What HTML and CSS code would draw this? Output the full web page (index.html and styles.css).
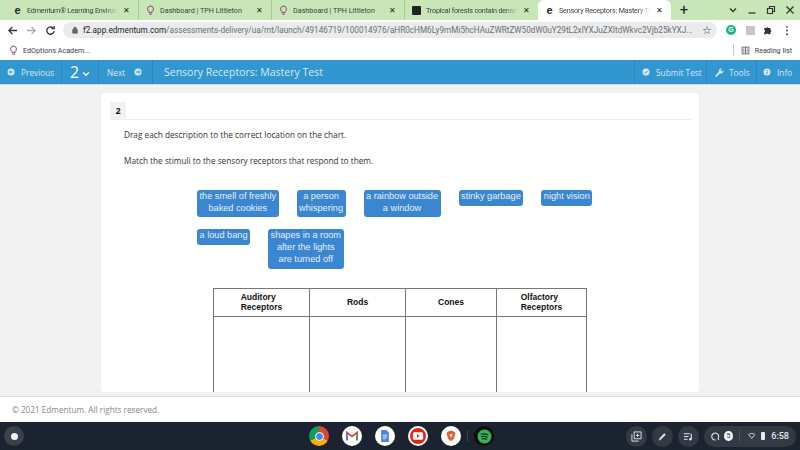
FILE: index.html
```html
<!DOCTYPE html>
<html lang="en">
<head>
  <meta charset="UTF-8">
  <title>Sensory Receptors: Mastery Test</title>
  <link rel="stylesheet" href="styles.css">
</head>
<body>
  <div class="tabstrip">
    <div class="tab">
      <span class="fav-e">e</span><span class="tab-title tab-fade">Edmentum® Learning Environ</span><span class="tab-x">✕</span>
    </div>
    <div class="tab">
      <svg class="fav-bulb" viewBox="0 0 12 14"><path d="M6 1a4 4 0 0 0-2 7.4V10h4V8.4A4 4 0 0 0 6 1zM4.500 12h3" fill="none" stroke="#8a3a7a" stroke-width="1.3"/></svg>
      <span class="tab-title">Dashboard | TPH Littleton</span><span class="tab-x">✕</span>
    </div>
    <div class="tab">
      <svg class="fav-bulb" viewBox="0 0 12 14"><path d="M6 1a4 4 0 0 0-2 7.4V10h4V8.4A4 4 0 0 0 6 1zM4.500 12h3" fill="none" stroke="#8a3a7a" stroke-width="1.3"/></svg>
      <span class="tab-title">Dashboard | TPH Littleton</span><span class="tab-x">✕</span>
    </div>
    <div class="tab">
      <span class="fav-book"></span><span class="tab-title tab-fade">Tropical forests contain dense</span><span class="tab-x">✕</span>
    </div>
    <div class="tab tab-active">
      <span class="fav-e">e</span><span class="tab-title tab-fade">Sensory Receptors: Mastery Te</span><span class="tab-x">✕</span>
    </div>
    <span class="tab-new">+</span>
    <div class="win-controls">
      <svg viewBox="0 0 10 10"><path d="M2 3.500l3 3 3-3" fill="none" stroke="#333" stroke-width="1.3"/></svg>
      <svg viewBox="0 0 10 10"><path d="M1.500 8h7" stroke="#333" stroke-width="1.3"/></svg>
      <svg viewBox="0 0 10 10"><path d="M1.500 3.500h5v5h-5zM3.500 3.500v-2h5v5h-2" fill="none" stroke="#333" stroke-width="1.2"/></svg>
      <svg viewBox="0 0 10 10"><path d="M1.500 1.500l7 7M8.500 1.500l-7 7" stroke="#333" stroke-width="1.3"/></svg>
    </div>
  </div>

  <div class="addressbar">
    <svg class="nav-icon" viewBox="0 0 12 12"><path d="M11 6H2M6 2L2 6l4 4" fill="none" stroke="#333" stroke-width="1.4"/></svg>
    <svg class="nav-icon" viewBox="0 0 12 12"><path d="M1 6h9M6 2l4 4-4 4" fill="none" stroke="#aaa" stroke-width="1.4"/></svg>
    <svg class="nav-icon" viewBox="0 0 12 12"><path d="M10 6.500A4 4 0 1 1 8.800 3.200M10 1v3H7" fill="none" stroke="#333" stroke-width="1.4"/></svg>
    <div class="omnibox">
      <svg class="lock" viewBox="0 0 10 10"><path d="M2 4.500h6V9H2zM3.300 4.500V3a1.700 1.700 0 0 1 3.400 0v1.500" fill="#666" stroke="#666" stroke-width=".8"/></svg>
      <span class="url"><span class="url-host">f2.app.edmentum.com</span>/assessments-delivery/ua/mt/launch/49146719/100014976/aHR0cHM6Ly9mMi5hcHAuZWRtZW50dW0uY29tL2xlYXJuZXItdWkvc2Vjb25kYXJ...</span>
      <span class="star">☆</span>
    </div>
    <span class="ext-g">G</span>
    <span class="ext-gray"></span>
    <svg class="ext-puzzle" viewBox="0 0 12 12"><path d="M1.500 3.500h2.500a1.300 1.300 0 0 1 2.500 0H9V6a1.300 1.300 0 0 1 0 2.500V11H6.500a1.300 1.300 0 0 0-2.500 0H1.500V8.500a1.300 1.300 0 0 0 0-2.500z" fill="#333"/></svg>
    <svg class="ext-menu" viewBox="0 0 4 12"><circle cx="2" cy="2" r="1" fill="#333"/><circle cx="2" cy="6" r="1" fill="#333"/><circle cx="2" cy="10" r="1" fill="#333"/></svg>
  </div>

  <div class="bookmarks">
    <svg class="fav-bulb" viewBox="0 0 12 14"><path d="M6 1a4 4 0 0 0-2 7.4V10h4V8.4A4 4 0 0 0 6 1zM4.500 12h3" fill="none" stroke="#8a3a7a" stroke-width="1.3"/></svg>
    <span class="bookmark-name">EdOptions Academ...</span>
    <span class="reading">
      <svg class="reading-icon" viewBox="0 0 12 12"><path d="M1.500 1.500h9v9h-9zM6 1.500v9M3 4h1.500M3 6h1.500M3 8h1.500M7.500 4H9M7.500 6H9M7.500 8H9" fill="none" stroke="#444" stroke-width="1"/></svg>
      Reading list
    </span>
  </div>

  <header class="appbar">
    <div class="appbar-item item-prev">
      <svg class="circle-icon" viewBox="0 0 10 10"><circle cx="5" cy="5" r="3.500" fill="#d5e8f4"/><path d="M7 5H3.200M4.800 3.400L3.200 5l1.600 1.600" fill="none" stroke="#3397cf" stroke-width="1"/></svg>
      Previous
    </div>
    <div class="appbar-item item-num">2<svg class="chev" viewBox="0 0 10 6"><path d="M1.500 1l3.500 3.500L8.500 1" fill="none" stroke="#fff" stroke-width="1.7"/></svg></div>
    <div class="appbar-item item-next">
      Next
      <svg class="circle-icon" viewBox="0 0 10 10"><circle cx="5" cy="5" r="3.500" fill="#d5e8f4"/><path d="M3 5h3.800M5.200 3.400L6.800 5 5.200 6.600" fill="none" stroke="#3397cf" stroke-width="1"/></svg>
    </div>
    <div class="test-title">Sensory Receptors: Mastery Test</div>
    <div class="appbar-item item-submit">
      <svg class="circle-icon" viewBox="0 0 10 10"><circle cx="5" cy="5" r="3.500" fill="#d5e8f4"/><path d="M3.300 5l1.200 1.200 2.200-2.400" fill="none" stroke="#3397cf" stroke-width="1"/></svg>
      Submit Test
    </div>
    <div class="appbar-item item-tools">
      <svg class="circle-icon" viewBox="0 0 10 10"><path d="M1 9l4-4.200a2.300 2.300 0 0 1 3-3L6.600 3.200l.5 1 1 .3L9.300 3.300a2.300 2.300 0 0 1-3.100 2.900L2.300 10z" fill="#d5e8f4"/></svg>
      Tools
    </div>
    <div class="appbar-item item-info">
      <svg class="circle-icon" viewBox="0 0 10 10"><circle cx="5" cy="5" r="3.500" fill="#d5e8f4"/><path d="M5 4.500v2.500M5 3v1" stroke="#3397cf" stroke-width="1"/></svg>
      Info
    </div>
  </header>

  <main class="stage">
    <section class="card">
      <div class="question-head"><span class="question-num">2</span></div>
      <p class="prompt prompt-first">Drag each description to the correct location on the chart.</p>
      <p class="prompt">Match the stimuli to the sensory receptors that respond to them.</p>

      <div class="chips">
        <div class="chip">the smell of freshly<br>baked cookies</div>
        <div class="chip">a person<br>whispering</div>
        <div class="chip">a rainbow outside<br>a window</div>
        <div class="chip">stinky garbage</div>
        <div class="chip">night vision</div>
        <div class="chip">a loud bang</div>
        <div class="chip">shapes in a room<br>after the lights<br>are turned off</div>
      </div>

      <table class="chart">
        <colgroup>
          <col class="col-a"><col class="col-b"><col class="col-c"><col class="col-d">
        </colgroup>
        <tr class="chart-head">
          <th><span class="th-left">Auditory<br>Receptors</span></th>
          <th>Rods</th>
          <th>Cones</th>
          <th><span class="th-left">Olfactory<br>Receptors</span></th>
        </tr>
        <tr class="chart-body">
          <td></td><td></td><td></td><td></td>
        </tr>
      </table>
    </section>
  </main>

  <footer class="page-footer">© 2021 Edmentum. All rights reserved.</footer>

  <div class="shelf">
    <span class="launcher"><span class="launcher-dot"></span></span>
    <div class="shelf-apps">
      <span class="app app-chrome"><span class="chrome-core"></span></span>
      <span class="app app-white">
        <svg viewBox="0 0 14 12"><path d="M1 11V2l6 4.500L13 2v9" fill="none" stroke="#d9453a" stroke-width="2"/><path d="M1 11V3" stroke="#3f7fe0" stroke-width="2"/><path d="M13 11V3" stroke="#35a853" stroke-width="2"/></svg>
      </span>
      <span class="app app-white">
        <svg viewBox="0 0 12 14"><path d="M1.500 0h6l3 3v11h-9z" fill="#4a86e8"/><path d="M3.500 6h5M3.500 8h5M3.500 10h3.500" stroke="#fff" stroke-width=".9"/></svg>
      </span>
      <span class="app app-yt">
        <svg viewBox="0 0 14 12"><rect x="1" y="1.500" width="12" height="9" rx="2" fill="#fff"/><path d="M5.800 4l3.400 2-3.400 2z" fill="#e62117"/></svg>
      </span>
      <span class="app app-white">
        <svg viewBox="0 0 12 14"><path d="M2 2l4-1.500L10 2l1 2-1.500 6L6 13 2.500 10 1 4z" fill="#e0602c"/><path d="M4 5h4L6 9z" fill="#fff"/></svg>
      </span>
      <span class="shelf-sep"></span>
      <span class="app app-spotify">
        <svg viewBox="0 0 14 14"><circle cx="7" cy="7" r="6.500" fill="#2fb457"/><path d="M3.500 5c2.500-.7 5-.5 7 .6M4 7.200c2-.5 4.200-.3 5.900.7M4.500 9.200c1.700-.4 3.300-.2 4.700.6" fill="none" stroke="#123" stroke-width="1"/></svg>
      </span>
    </div>
    <div class="shelf-tray">
      <span class="tray-btn">
        <svg viewBox="0 0 12 12"><path d="M3.500 1h7.500v7.500H3.500zM1 3.500V11h7.500M7.200 3v3.500M5.500 4.800H9" fill="none" stroke="#e8eaed" stroke-width="1"/></svg>
      </span>
      <span class="tray-btn">
        <svg viewBox="0 0 12 12"><path d="M2 10.500l1-3L8 2.500l1.500 1.500-5 5z" fill="#e8eaed"/></svg>
      </span>
      <span class="tray-btn">
        <svg viewBox="0 0 12 12"><path d="M1 3h6.500M1 6h5M1 9h4M9 3v6" fill="none" stroke="#e8eaed" stroke-width="1.2"/><circle cx="8" cy="9" r="1.300" fill="#e8eaed"/></svg>
      </span>
      <span class="tray-status">
        <svg class="tray-q" viewBox="0 0 12 12"><path d="M10.500 10.500L8.500 8.500M9.500 8A4.500 4.500 0 1 0 6 10.500" fill="none" stroke="#e8eaed" stroke-width="1.4"/></svg>
        <span class="tray-count">5</span>
        <span class="tray-sep"></span>
        <svg class="tray-wifi" viewBox="0 0 12 10"><path d="M1 2.500c3-2 7-2 10 0L6 9z" fill="none" stroke="#e8eaed" stroke-width="1.3"/></svg>
        <span class="tray-batt"></span>
        <span class="tray-time">6:58</span>
      </span>
    </div>
  </div>
</body>
</html>
```
FILE: styles.css
```css
html, body {
  margin: 0;
  height: 100%;
}

body {
  width: 800px;
  height: 450px;
  overflow: hidden;
  display: flex;
  flex-direction: column;
  font-family: "Open Sans", "Liberation Sans", sans-serif;
  background: #fff;
}

/* browser chrome */
.tabstrip {
  height: 20px;
  flex: none;
  display: flex;
  align-items: center;
  padding-left: 6px;
  background: #c9e6b9;
  font-family: Roboto, "Liberation Sans", sans-serif;
  font-size: 7.2px;
  color: #3c4043;
}

.tab {
  width: 133px;
  height: 20px;
  flex: none;
  box-sizing: border-box;
  padding: 0 5px 0 7px;
  display: flex;
  align-items: center;
  gap: 5px;
  border-right: 1px solid #a9c79b;
}

.tab:nth-child(4) {
  border-right: none;
}

.tab-active {
  background: #fff;
  border-right: none;
  border-radius: 6px 6px 0 0;
}

.tab-title {
  flex: 1;
  overflow: hidden;
  white-space: nowrap;
  min-width: 0;
}

.tab-fade {
  letter-spacing: -0.2px;
  -webkit-mask-image: linear-gradient(to right, #000 85%, transparent 100%);
  mask-image: linear-gradient(to right, #000 85%, transparent 100%);
}

.tab-x {
  font-size: 8px;
  color: #222;
  margin-right: 3px;
}

.fav-e {
  width: 9px;
  height: 9px;
  flex: none;
  color: #2a1f2a;
  font: bold 11px/8px "Liberation Sans", sans-serif;
  text-align: center;
}

.fav-bulb {
  width: 9px;
  height: 11px;
  flex: none;
}

.fav-book {
  width: 9px;
  height: 9px;
  flex: none;
  background: #222;
  border-radius: 1px;
}

.tab-new {
  width: 26px;
  text-align: center;
  font-size: 15px;
  color: #222;
}

.win-controls {
  margin-left: auto;
  display: flex;
  gap: 9px;
  padding-right: 5px;
}

.win-controls svg {
  width: 10px;
  height: 10px;
}

.addressbar {
  height: 20px;
  flex: none;
  display: flex;
  align-items: center;
  padding-left: 7px;
  background: #fff;
}

.nav-icon {
  width: 11px;
  height: 11px;
  margin-right: 8px;
  flex: none;
}

.omnibox {
  width: 654px;
  height: 16px;
  flex: none;
  margin-left: -1px;
  display: flex;
  align-items: center;
  box-sizing: border-box;
  padding: 0 5px 0 8px;
  background: #e9ebed;
  border-radius: 8px;
  font-family: Roboto, "Liberation Sans", sans-serif;
  font-size: 8.2px;
  color: #6b6f72;
}

.lock {
  width: 8px;
  height: 8px;
  flex: none;
  margin-right: 4px;
}

.url {
  flex: 1;
  min-width: 0;
  white-space: nowrap;
}

.url-host {
  color: #222;
}

.star {
  font-size: 11px;
  color: #444;
}

.ext-g {
  width: 10px;
  height: 10px;
  flex: none;
  margin-left: 9px;
  border-radius: 50%;
  background: #19b38f;
  color: #fff;
  font: bold 7px/10px "Liberation Sans", sans-serif;
  text-align: center;
}

.ext-gray {
  width: 9px;
  height: 9px;
  flex: none;
  margin-left: 10px;
  background: #c5c7c9;
}

.ext-puzzle {
  width: 10px;
  height: 10px;
  flex: none;
  margin-left: 8px;
}

.ext-menu {
  width: 4px;
  height: 11px;
  flex: none;
  margin-left: 12px;
}

.bookmarks {
  height: 20px;
  flex: none;
  display: flex;
  align-items: center;
  padding-left: 9px;
  gap: 5px;
  background: #fff;
  font-family: Roboto, "Liberation Sans", sans-serif;
  font-size: 7.2px;
  color: #3c4043;
}

.reading {
  margin-left: auto;
  padding-left: 7px;
  margin-right: 8px;
  border-left: 1px solid #ccc;
  display: flex;
  align-items: center;
  gap: 5px;
  height: 12px;
}

.reading-icon {
  width: 9px;
  height: 9px;
}

/* app header */
.appbar {
  height: 24px;
  flex: none;
  display: flex;
  align-items: stretch;
  background: #3397cf;
  border-bottom: 1px solid #cfd8de;
  color: #d5e8f4;
  font-size: 8.3px;
}

.appbar-item {
  display: flex;
  align-items: center;
  gap: 5px;
  box-sizing: border-box;
  white-space: nowrap;
  border-right: 1px solid #2c88bc;
}

.circle-icon {
  width: 10px;
  height: 10px;
  flex: none;
}

.item-prev {
  width: 62px;
  padding-left: 6px;
}

.item-num {
  width: 37px;
  padding-left: 8px;
  gap: 3px;
  font-size: 16px;
  color: #fff;
}

.chev {
  width: 8px;
  height: 6px;
  margin-top: 4px;
}

.item-next {
  width: 54px;
  padding-left: 8px;
  gap: 8px;
}

.test-title {
  flex: 1;
  display: flex;
  align-items: center;
  padding-left: 11px;
  font-size: 10.5px;
}

.item-submit {
  width: 73px;
  padding-left: 6px;
  border-left: 1px solid #2c88bc;
}

.item-tools {
  width: 50px;
  padding-left: 7px;
}

.item-info {
  width: 43px;
  padding-left: 5px;
  border-right: none;
}

/* question area */
.stage {
  flex: 1;
  min-height: 0;
  padding: 8px 101px 4px;
  background: #f2f2f2;
  border-bottom: 1px solid #dcdcdc;
}

.card {
  height: 100%;
  box-sizing: border-box;
  padding: 9px 8px 0 9px;
  background: #fff;
  border-radius: 4px;
  overflow: hidden;
}

.question-head {
  height: 17px;
  border-bottom: 1px solid #eee;
}

.question-num {
  display: block;
  width: 16px;
  height: 17px;
  background: #f2f2f2;
  text-align: center;
  font-size: 9px;
  font-weight: 700;
  line-height: 17px;
  color: #222;
}

.prompt {
  margin: 0 0 0 14px;
  padding-top: 14px;
  font-size: 8.25px;
  line-height: 12px;
  color: #333;
}

.prompt-first {
  padding-top: 9px;
}

.chips {
  display: flex;
  flex-wrap: wrap;
  align-items: flex-start;
  column-gap: 18px;
  row-gap: 12px;
  width: 410px;
  margin: 23px 0 0 87px;
}

.chip {
  padding: 1px 2.5px 3px;
  background: #3a86d0;
  border-radius: 3px;
  color: #e6eff8;
  font-family: "Liberation Sans", sans-serif;
  font-size: 9.2px;
  line-height: 11.7px;
  text-align: center;
  white-space: nowrap;
}

.chart {
  margin: 19px 0 0 103px;
  table-layout: fixed;
  width: 373px;
  border-collapse: collapse;
  font-family: "Liberation Sans", sans-serif;
  font-size: 8.5px;
  color: #111;
}

.col-a, .col-b {
  width: 96px;
}

.col-c {
  width: 91px;
}

.col-d {
  width: 90px;
}

.chart th, .chart td {
  border: 1px solid #777;
  padding: 0;
}

.chart th {
  padding-bottom: 1px;
}

.chart-head {
  height: 28px;
}

.chart-body {
  height: 120px;
}

.th-left {
  display: inline-block;
  text-align: left;
  line-height: 10px;
}

.page-footer {
  height: 25px;
  flex: none;
  padding-left: 12px;
  line-height: 25px;
  background: #fff;
  font-size: 8.2px;
  color: #888;
}

/* chromeos shelf */
.shelf {
  height: 28px;
  flex: none;
  display: flex;
  align-items: center;
  background: #1b2330;
}

.launcher {
  width: 20px;
  height: 20px;
  margin-left: 4px;
  border-radius: 50%;
  background: #3a414d;
  display: flex;
  align-items: center;
  justify-content: center;
}

.launcher-dot {
  width: 7px;
  height: 7px;
  border-radius: 50%;
  background: #f1f3f4;
}

.shelf-apps {
  display: flex;
  align-items: center;
  gap: 13px;
  margin-left: 285px;
}

.app {
  width: 20px;
  height: 20px;
  border-radius: 50%;
  display: flex;
  align-items: center;
  justify-content: center;
  flex: none;
}

.app svg {
  width: 12px;
  height: 12px;
}

.app-chrome {
  background: conic-gradient(#db4437 0 120deg, #f4b400 120deg 240deg, #0f9d58 240deg);
}

.chrome-core {
  width: 9px;
  height: 9px;
  border-radius: 50%;
  background: #4a86e8;
  border: 1.5px solid #fff;
  box-sizing: border-box;
}

.app-white {
  background: #fff;
}

.app-yt {
  background: #e62117;
  border: 2px solid #fff;
  box-sizing: border-box;
}

.app-spotify {
  background: #0a0f0c;
}

.app-spotify svg {
  width: 15px;
  height: 15px;
}

.shelf-sep {
  width: 1px;
  height: 12px;
  margin: 0 -7px;
  background: #3a414d;
}

.shelf-tray {
  display: flex;
  align-items: center;
  gap: 5px;
  margin-left: auto;
  margin-right: 4px;
}

.tray-btn {
  width: 21px;
  height: 21px;
  border-radius: 50%;
  background: #333a46;
  display: flex;
  align-items: center;
  justify-content: center;
}

.tray-btn svg {
  width: 11px;
  height: 11px;
}

.tray-status {
  width: 92px;
  height: 21px;
  box-sizing: border-box;
  padding: 0 7px;
  border-radius: 11px;
  background: #333a46;
  display: flex;
  align-items: center;
  gap: 4px;
  font-family: Roboto, "Liberation Sans", sans-serif;
  font-size: 9px;
  color: #e8eaed;
}

.tray-q {
  width: 11px;
  height: 11px;
}

.tray-count {
  width: 10px;
  height: 10px;
  border-radius: 50%;
  background: #f1f3f4;
  color: #333a46;
  font-size: 7px;
  line-height: 10px;
  text-align: center;
}

.tray-sep {
  width: 1px;
  height: 12px;
  margin: 0 4px 0 2px;
  background: #4a515d;
}

.tray-wifi {
  width: 9px;
  height: 8px;
}

.tray-batt {
  width: 5px;
  height: 8px;
  margin: 0 2px;
  background: #e8eaed;
  border-radius: 1px;
}

.tray-time {
  font-weight: 500;
}
```
